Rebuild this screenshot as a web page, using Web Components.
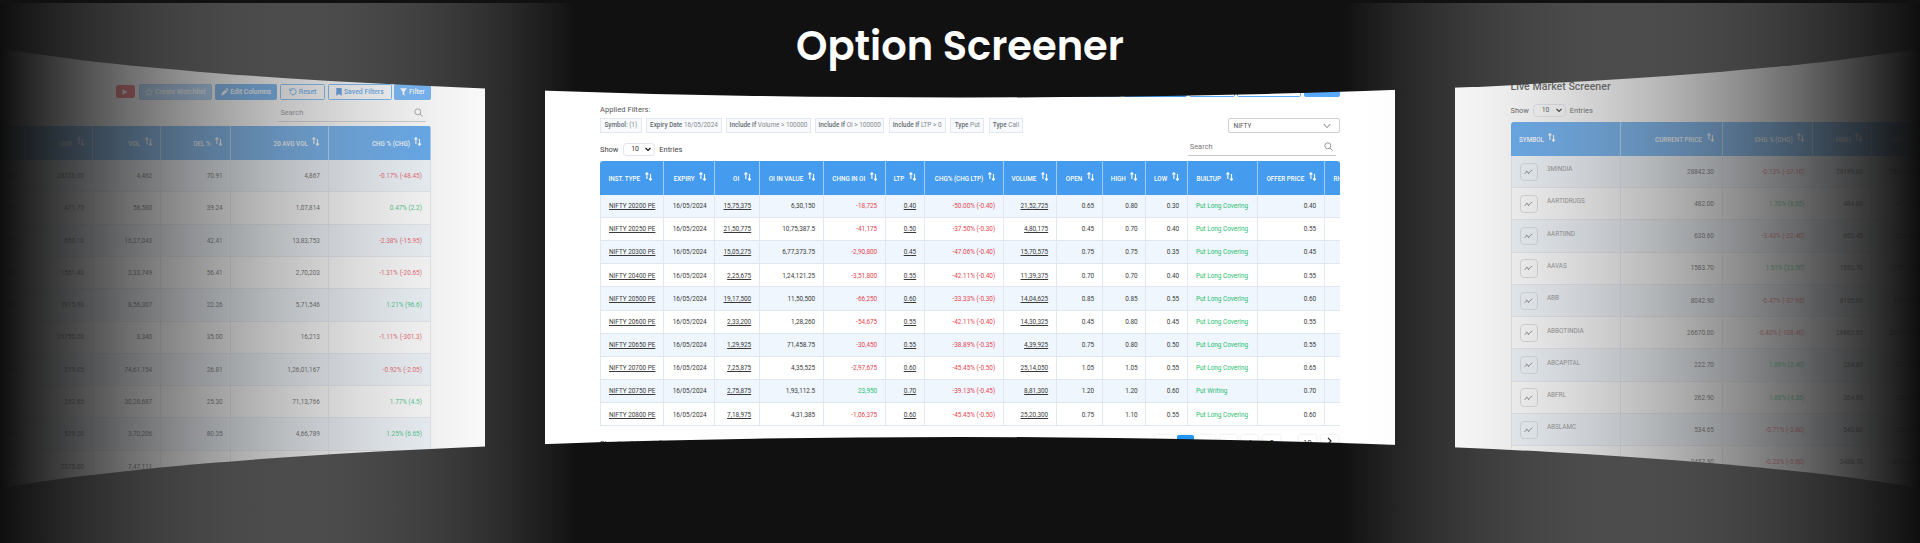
<!DOCTYPE html>
<html lang="en">
<head>
<meta charset="utf-8">
<title>Option Screener</title>
<style>
html,body{margin:0;height:100%;background:#111;overflow:hidden}
body{font-family:Roboto,"Liberation Sans",sans-serif}
</style>
</head>
<body>
<screener-carousel>
  <span slot="title">Option Screener</span>
  <carousel-slide style="--top:83.6px;--left:56px;--right:54.3px">
    <screener-toolbar></screener-toolbar>
    <entries-bar bare style="--gap:8.1px"></entries-bar>
    <data-table data-set="stocks" style="--gap:5px;--row:32.3px"></data-table>
  </carousel-slide>
  <carousel-slide style="--top:81px">
    <screener-toolbar></screener-toolbar>
    <filter-bar></filter-bar>
    <entries-bar search style="--gap:9.3px"></entries-bar>
    <data-table data-set="options" style="--gap:5px;--row:23.17px"></data-table>
    <table-pager></table-pager>
  </carousel-slide>
  <carousel-slide style="--top:79px;--left:55.500px">
    <slide-heading>Live Market Screener</slide-heading>
    <entries-bar style="--gap:9.6px"></entries-bar>
    <data-table data-set="market" style="--gap:5.2px;--row:32.27px"></data-table>
  </carousel-slide>
</screener-carousel>
<script>
const define = (name, html, setup) => customElements.define(name, class extends HTMLElement {
  constructor() {
    super();
    this.attachShadow({ mode: 'open' });
  }
  connectedCallback() {
    this.shadowRoot.innerHTML = html;
    if (setup) setup(this, this.shadowRoot);
  }
});

/* edge shade: alpha falls linearly while the tint climbs from near black to white */
const shade = dir => {
  const stops = [];
  for (let i = 0; i <= 32; i++) {
    const t = i / 32, c = Math.round(14 + t * 241);
    stops.push(`rgba(${c},${c},${c},${(1 - t).toFixed(4)}) ${(t * 100).toFixed(2)}%`);
  }
  return `linear-gradient(to ${dir}, ${stops.join(',')})`;
};

define('sort-icon', `<style>:host{display:block;width:7.4px;height:9px;flex:none}svg{display:block}</style>
<svg width="7.4" height="9" viewBox="0 0 7.4 9" fill="none" stroke="#fff" stroke-width="1.15"><path d="M1.9 7V.9M.4 2.3 1.9.7l1.5 1.6M5.5 2v6M4 6.7l1.5 1.6L7 6.7"/></svg>`);

define('search-field', `<style>
:host{display:flex;justify-content:space-between;align-items:center;box-sizing:border-box;width:148px;height:16.5px;margin:-3px 4.5px 0 auto;padding:0 3px 1px 2.2px;border-bottom:1px solid #c9c9c9;font-size:7.4px;color:#777;letter-spacing:.05px}
</style><span>Search</span><svg width="9" height="9" viewBox="0 0 9 9" fill="none" stroke="#999" stroke-width="1"><circle cx="3.8" cy="3.8" r="3"/><path d="m6 6 2.6 2.6"/></svg>`);

define('screener-toolbar', `<style>
:host{display:flex;justify-content:flex-end;align-items:center;gap:2.6px;height:16.4px;font-size:6.9px;font-weight:500}
.b{box-sizing:border-box;height:16.4px;border:1px solid #58a9fb;border-radius:1.6px;display:flex;align-items:center;justify-content:center;gap:2px;color:#4298f0;white-space:nowrap}
.f{background:#58a9fb;color:#fff}.e{background:#459bf0;border-color:#459bf0}.w{background:#8fc1f5;border-color:#7fb5ee}
.yt{width:18.4px;height:12.7px;border-radius:2.5px;background:#e5303a;display:flex;align-items:center;justify-content:center;margin-right:1.4px}
svg{display:block;flex:none}
</style>
<div class="yt"><svg width="6" height="6" viewBox="0 0 6 6" fill="#fff"><path d="M.5.3 5.7 3 .5 5.7z"/></svg></div>
<div class="b f w" style="width:73.4px"><svg width="8" height="8" viewBox="0 0 8 8" fill="none" stroke="#fff" stroke-width=".8"><path d="m4 .7 1 2.2 2.4.3-1.8 1.6.5 2.4L4 6 1.9 7.2l.5-2.4L.6 3.2 3 2.9z"/></svg>Create Watchlist</div>
<div class="b f e" style="width:62.7px"><svg width="7.5" height="8" viewBox="0 0 8 8" fill="#fff"><path d="M.3 7.7.8 5.3 4.7 1.4l2 2L2.7 7.3zM5.3.8 6 .1q.4-.3.8 0l1.1 1.1q.3.4 0 .8l-.7.8z"/></svg>Edit Columns</div>
<div class="b" style="width:45.6px"><svg width="8" height="8" viewBox="0 0 8 8" fill="none" stroke="#4298f0"><path d="M1.5 1.9A3.1 3.1 0 1 1 .9 4M.8.5v2.2H3"/></svg>Reset</div>
<div class="b" style="width:63.6px"><svg width="6" height="8" viewBox="0 0 6 8" fill="#2f86e0"><path d="M.3 0h5.4v7.8L3 6 .3 7.8z"/></svg>Saved Filters</div>
<div class="b f" style="width:36.5px"><svg width="7" height="8" viewBox="0 0 7 8" fill="#fff"><path d="M0 .3h7L4.4 3.7v4L2.6 6.4V3.7z"/></svg>Filter</div>`);

define('slide-heading', `<style>:host{display:block;height:15px;line-height:15px;font-size:10.6px;color:#3c3c3c;white-space:nowrap;font-weight:500}</style><slot></slot>`);

define('filter-bar', `<style>
:host{display:block;margin-top:7.6px}
.l{height:10px;line-height:10px;font-size:7.5px;color:#555;margin-bottom:3px;letter-spacing:.05px}
.r{display:flex;gap:4.6px;height:15.5px;align-items:flex-start}
.c{box-sizing:border-box;height:14.7px;line-height:12.7px;border:1px solid #e3e7f2;background:#f8fafd;color:#83898f;font-size:6.4px;text-align:center;white-space:nowrap}
b{font-weight:500;color:#646b72}
.s{box-sizing:border-box;margin-left:auto;width:112.5px;height:15.5px;border:1px solid #cfcfcf;border-radius:2px;display:flex;justify-content:space-between;align-items:center;padding:0 8px 0 5px;font-size:6.5px;color:#555}
</style><div class="l">Applied Filters:</div><div class="r"></div>`, (el, root) => {
  const chips = [['Symbol:', '(1)', 41.7], ['Expiry Date', '16/05/2024', 75.4], ['Include If', 'Volume &gt; 100000', 84.5], ['Include If', 'OI &gt; 100000', 68.6], ['Include If', 'LTP &gt; 0', 57.2], ['Type', 'Put', 33.8], ['Type', 'Call', 34.4]];
  root.querySelector('.r').innerHTML = chips.map(([a, b, w]) => `<div class="c" style="width:${w}px"><b>${a}</b> ${b}</div>`).join('') +
    `<div class="s"><span>NIFTY</span><svg width="8" height="6" viewBox="0 0 8 6" fill="none" stroke="#777"><path d="m.7 1 3.3 3.6L7.3 1"/></svg></div>`;
});

define('entries-bar', `<style>
:host{display:flex;align-items:center;height:13.4px;margin-top:var(--gap);font-size:7.5px;color:#444;white-space:nowrap}
:host([bare]) .n{display:none}
.n{display:flex;align-items:center;gap:4.2px}
.sel{box-sizing:border-box;width:32.4px;height:13.4px;border:1px solid #e1e4ee;border-radius:3.5px;display:flex;align-items:center;justify-content:space-between;padding:0 3px 0 7.5px;font-size:6.9px;color:#333}
</style><div class="n"><span>Show</span><div class="sel">10<svg width="6" height="5" viewBox="0 0 6 5" fill="none" stroke="#111" stroke-width="1.2"><path d="m.5 1 2.500 2.500L5.500 1"/></svg></div><span>Entries</span></div>`, (el, root) => {
  if (el.hasAttribute('bare') || el.hasAttribute('search')) root.append(document.createElement('search-field'));
});

define('table-pager', `<style>
:host{display:flex;justify-content:space-between;align-items:flex-start;margin-top:8.600px;height:17px;font-size:7.4px;color:#333}
.t{line-height:17px}.p{display:flex;gap:4.6px;margin-right:2.500px}
.p span{width:17px;height:17px;line-height:15px;text-align:center;border-radius:2px;box-shadow:0 0 3px #0002}
.p .on{background:#2196f3;color:#fff}.p .d{box-shadow:none;width:9.7px}
</style><div class="t">Showing 1 to 10 of 96 Entries</div><div class="p"><span>‹</span><span class="on">1</span><span>2</span><span>3</span><span>4</span><span>5</span><span class="d">...</span><span>10</span><span><svg width="5" height="8" viewBox="0 0 5 8" fill="none" stroke="#222" stroke-width="1.2"><path d="m1 .8 3 3.2-3 3.200"/></svg></span></div>`);

const P = 'Put Long Covering';
const sets = {
  options: {
    cols: [['INST. TYPE', 64.1, 'l u'], ['EXPIRY', 51.4], ['OI', 44.500, 'u'], ['OI IN VALUE', 64], ['CHNG IN OI', 62, 's'], ['LTP', 39, 'u'], ['CHG% (CHG LTP)', 79, 's'], ['VOLUME', 53, 'u'], ['OPEN', 46], ['HIGH', 43.500], ['LOW', 41.500], ['BUILTUP', 70, 'l g'], ['OFFER PRICE', 67], ['RHO', 40, 'l']],
    rows: [
      ['20200', '15,75,375', '6,30,150', '-18,725', '0.40', '-50.00% (-0.40)', '21,52,725', '0.65', '0.80', '0.30', P, '0.40'],
      ['20250', '21,50,775', '10,75,387.5', '-41,175', '0.50', '-37.50% (-0.30)', '4,80,175', '0.45', '0.70', '0.40', P, '0.55'],
      ['20300', '15,05,275', '6,77,373.75', '-2,90,800', '0.45', '-47.06% (-0.40)', '15,70,575', '0.75', '0.75', '0.35', P, '0.45'],
      ['20400', '2,25,675', '1,24,121.25', '-3,51,800', '0.55', '-42.11% (-0.40)', '11,39,375', '0.70', '0.70', '0.40', P, '0.55'],
      ['20500', '19,17,500', '11,50,500', '-66,250', '0.60', '-33.33% (-0.30)', '14,04,625', '0.85', '0.85', '0.55', P, '0.60'],
      ['20600', '2,33,200', '1,28,260', '-54,675', '0.55', '-42.11% (-0.40)', '14,30,325', '0.45', '0.80', '0.45', P, '0.55'],
      ['20650', '1,29,925', '71,458.75', '-30,450', '0.55', '-38.89% (-0.35)', '4,39,925', '0.75', '0.80', '0.50', P, '0.55'],
      ['20700', '7,25,875', '4,35,525', '-2,97,675', '0.60', '-45.45% (-0.50)', '25,14,050', '1.05', '1.05', '0.55', P, '0.65'],
      ['20750', '2,75,875', '1,93,112.5', '23,950', '0.70', '-39.13% (-0.45)', '8,81,300', '1.20', '1.20', '0.60', 'Put Writing', '0.70'],
      ['20800', '7,18,975', '4,31,385', '-1,06,375', '0.60', '-45.45% (-0.50)', '25,20,300', '0.75', '1.10', '0.55', P, '0.60']
    ].map(([s, ...r]) => ['NIFTY ' + s + ' PE', '16/05/2024', ...r, ''])
  },
  stocks: {
    cols: [['', 265], ['', 70.2], ['LOW', 66.5], ['VOL', 68.3], ['DEL %', 70.5], ['20 AVG VOL', 97.2], ['CHG % (CHG)', 102, 's']],
    rows: [
      ['', '00', '28726.00', '4,462', '70.91', '4,867', '-0.17% (-48.45)'],
      ['', '10', '471.75', '58,580', '39.24', '1,07,814', '0.47% (2.2)'],
      ['', '20', '650.10', '16,27,043', '42.41', '13,83,753', '-2.38% (-15.95)'],
      ['', '00', '1551.40', '2,33,749', '56.41', '2,70,203', '-1.31% (-20.65)'],
      ['', '90', '7915.90', '8,56,307', '22.26', '5,71,546', '1.21% (96.6)'],
      ['', '10', '26750.00', '8,340', '35.00', '16,213', '-1.11% (-301.3)'],
      ['', '00', '219.05', '74,61,154', '26.81', '1,26,01,167', '-0.92% (-2.05)'],
      ['', '70', '252.65', '30,28,687', '25.30', '71,13,766', '1.77% (4.5)'],
      ['', '30', '529.20', '3,70,206', '80.35', '4,66,789', '1.25% (6.65)'],
      ['', '40', '2375.00', '7,47,111', '', '', '']
    ]
  },
  market: {
    cols: [['SYMBOL', 110.2, 'l k'], ['CURRENT PRICE', 102], ['CHG % (CHG)', 90.7, 's'], ['HIGH', 58.3], ['LOW', 53], ['', 325.8]],
    rows: [
      ['3MINDIA', '28842.30', '-0.13% (-37.10)', '29199.00', '28812.00', ''],
      ['AARTIDRUGS', '482.00', '1.70% (8.05)', '484.00', '471.00', ''],
      ['AARTIIND', '630.60', '-3.43% (-22.40)', '652.45', '628.00', ''],
      ['AAVAS', '1583.70', '1.51% (23.50)', '1592.70', '1561.00', ''],
      ['ABB', '8042.90', '-0.47% (-37.95)', '8125.00', '7985.00', ''],
      ['ABBOTINDIA', '26670.00', '-0.40% (-108.40)', '26862.55', '26585.00', ''],
      ['ABCAPITAL', '222.70', '1.09% (2.40)', '224.85', '221.00', ''],
      ['ABFRL', '262.90', '1.68% (4.35)', '264.60', '258.00', ''],
      ['ABSLAMC', '534.65', '-0.71% (-3.80)', '543.80', '532.00', ''],
      ['', '2457.90', '-0.23% (-5.60)', '2488.70', '2451.00', '']
    ]
  }
};

define('data-table', `<style>
:host{display:block;margin-top:var(--gap);width:740px;overflow:hidden;border-radius:3px 3px 0 0;font-size:6.4px;color:#3a3a3a}
.h,.r{display:grid;grid-template-columns:var(--cols)}
.h{height:33.6px;background:#459bee;color:#fff;font-weight:500;font-size:6.3px}
.r{height:var(--row)}.r:nth-child(odd){background:#eff6fd}
.h>div,.r>div{box-sizing:border-box;display:flex;align-items:center;justify-content:flex-end;padding:0 7.800px;border-right:1px solid #e1e7ee;white-space:nowrap;overflow:hidden}
.r>div{border-bottom:1px solid #e1e7ee;padding-top:.6px}.r>div:first-child{border-left:1px solid #e1e7ee}
.h>div{border-color:#9fccf7;gap:4.6px;padding-top:2px}
.h sort-icon{margin-top:-5px}
.h>.l{justify-content:flex-start;padding-left:8.500px}
.r>.l{justify-content:flex-start;padding-left:8px}
.u{text-decoration:underline;text-underline-offset:.8px}
.r>.g{color:#1fbd70}.r>.d{color:#e8434d}
.r>.k{gap:9px;color:#777}.k span{margin-top:-5px}.k i{box-sizing:border-box;width:18.4px;height:18.4px;border:1px solid #d3d6da;border-radius:4px;display:flex;align-items:center;justify-content:center}
</style><div class="h"></div>`, (el, root) => {
  const { cols, rows } = sets[el.dataset.set];
  el.style.setProperty('--cols', cols.map(c => c[1] + 'px').join(' '));
  root.querySelector('.h').innerHTML = cols.map(c => `<div class="${(c[2] || '').includes('l') ? 'l' : ''}">${c[0] ? `<span>${c[0]}</span><sort-icon></sort-icon>` : ''}</div>`).join('');
  const spark = `<i><svg width="9" height="6" viewBox="0 0 9 6" fill="none" stroke="#777" stroke-width=".9"><path d="m.5 5 2.3-2.6 1.8 1.7L8.3.8"/><circle cx="2.8" cy="2.4" r=".4"/><circle cx="4.6" cy="4.1" r=".4"/></svg></i>`;
  root.innerHTML += rows.map(r => `<div class="r">${r.map((v, i) => {
    let c = cols[i][2] || '';
    if (c === 's') c = v[0] === '-' ? 'd' : 'g';
    return `<div class="${c}">${c.includes('k') ? spark : ''}<span>${v}</span></div>`;
  }).join('')}</div>`).join('');
});

define('carousel-slide', `<style>
:host{display:block;box-sizing:border-box;flex:none;width:850px;height:543px;padding:var(--top) var(--right,55px) 0 var(--left,55px);background:#fff;overflow:hidden}
</style><slot></slot>`);

define('screener-carousel', `<style>
:host{display:grid;grid-template:543px / 1920px;width:1920px;height:543px;overflow:hidden;background:#111}
.track,.curve,.edges,h1{grid-area:1/1}
.track{display:flex;gap:60px;margin-left:-365px;width:2650px}
.curve{display:block}
.edges{display:flex;justify-content:space-between;margin-top:3px}
.edges div{width:576px}
h1{margin:0;justify-self:center;font:600 40px/50px Poppins,Inter,sans-serif;color:#fff;margin-top:21px;height:50px;white-space:nowrap}
</style>
<div class="track"><slot></slot></div>
<svg class="curve" width="1920" height="543" viewBox="0 0 1920 543" fill="#111"><path d="M0 0H1920V13.5H0z"/><ellipse cx="960" cy="13.5" rx="1056" ry="84"/><path d="M0 525H1920V543H0z"/><ellipse cx="960" cy="525" rx="1056" ry="88"/></svg>
<div class="edges"><div></div><div></div></div>
<h1><slot name="title"></slot></h1>`, (el, root) => {
  const [l, r] = root.querySelectorAll('.edges div');
  l.style.background = shade('right');
  r.style.background = shade('left');
});
</script>
</body>
</html>
